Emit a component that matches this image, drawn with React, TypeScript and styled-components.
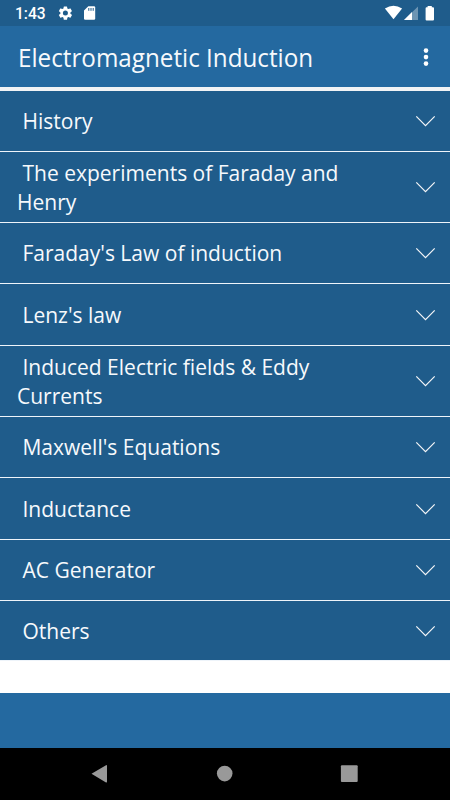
import React from "react";
import styled, { createGlobalStyle } from "styled-components";

const Global = createGlobalStyle`
  * { box-sizing: border-box; }
  body { margin: 0; background: #fff; }
`;
const Screen = styled.div`
  width: 450px;
  height: 800px;
  display: flex;
  flex-direction: column;
  overflow: hidden;
  background: #fff;
  color: #f6f9fc;
  font-family: "Open Sans", "Noto Sans", sans-serif;
`;
const StatusBar = styled.div`
  height: 26px;
  flex: none;
  display: flex;
  align-items: center;
  background: #1f5c8b;
  color: #fff;
`;
const Clock = styled.span`
  width: 43px;
  margin-left: 15px;
  font: 500 15.6px/26px Roboto, sans-serif;
  padding-top: 2px;
`;
const StatusIcons = styled.svg`
  display: block;
  flex: none;
`;
const Spacer = styled.div`
  flex: 1;
`;
const Header = styled.header`
  height: 65px;
  flex: none;
  display: flex;
  align-items: center;
  justify-content: space-between;
  padding: 0 19px 0 17.8px;
  background: #2469a0;
  border-bottom: 4px solid #f1f3f5;
`;
const Title = styled.h1`
  margin: 0;
  font-size: 24.8px;
  line-height: 34px;
  font-weight: 400;
  white-space: nowrap;
  transform: scaleX(0.977);
  transform-origin: left;
`;
const MenuButton = styled.button`
  border: 0;
  padding: 0;
  background: none;
  display: flex;
  height: 20px;
`;
const List = styled.main`
  flex: none;
`;
const Row = styled.div<{ $height: number }>`
  height: ${(p) => p.$height}px;
  display: flex;
  align-items: center;
  justify-content: space-between;
  padding: 0 14px 0 16.5px;
  background: #1f5c8b;
  border-bottom: 1px solid #eef4fa;
`;
const Label = styled.span`
  font-size: 22px;
  line-height: 29.5px;
  white-space: pre;
  transform: scaleX(0.955);
  transform-origin: left;
`;
const Footer = styled.footer`
  height: 55px;
  margin-top: 32px;
  flex: none;
  background: #2469a0;
`;
const NavBar = styled.nav`
  flex: 1;
  background: #000;
`;

const rows = [
  { text: " History", height: 61 },
  { text: " The experiments of Faraday and\nHenry", height: 71 },
  { text: " Faraday's Law of induction", height: 61 },
  { text: " Lenz's law", height: 62 },
  { text: " Induced Electric fields & Eddy\nCurrents", height: 71 },
  { text: " Maxwell's Equations", height: 61 },
  { text: " Inductance", height: 62 },
  { text: " AC Generator", height: 61 },
  { text: " Others", height: 60 },
];

const Chevron = () => (
  <svg width="21" height="12" viewBox="0 0 21 12" fill="none" stroke="#f4f6f8" strokeWidth="1.2">
    <path d="M1.3 1.3L10.5 10.7L19.7 1.3" />
  </svg>
);

export default function App() {
  return (
    <Screen>
      <Global />
      <StatusBar>
        <Clock>1:43</Clock>
        <StatusIcons width="40" height="26" viewBox="58 0 40 26" fill="#fff">
          <g transform="translate(57 4.7) scale(.7)">
            <path d="M19.14 12.94c.04-.3.06-.61.06-.94s-.02-.64-.07-.94l2.03-1.58a.49.49 0 0 0 .12-.61l-1.92-3.32a.49.49 0 0 0-.59-.22l-2.39.96a7 7 0 0 0-1.62-.94L14.4 2.81a.48.48 0 0 0-.48-.41h-3.84a.47.47 0 0 0-.47.41l-.36 2.54a7.4 7.4 0 0 0-1.62.94l-2.39-.96a.47.47 0 0 0-.59.22L2.74 8.87a.48.48 0 0 0 .12.61l2.03 1.58a6 6 0 0 0 0 1.88l-2.03 1.58a.49.49 0 0 0-.12.61l1.92 3.32c.12.22.37.29.59.22l2.39-.96c.5.38 1.03.7 1.62.94l.36 2.54c.05.24.24.41.48.41h3.84c.24 0 .44-.17.47-.41l.36-2.54a7.4 7.4 0 0 0 1.62-.94l2.39.96c.22.08.47 0 .59-.22l1.92-3.32a.47.47 0 0 0-.12-.61zM12 15.6a3.6 3.6 0 1 1 0-7.2 3.6 3.6 0 0 1 0 7.2z" />
          </g>
          <path d="M88.3 6.3H94q1.2 0 1.2 1.2V18.6q0 1.2-1.2 1.2H85.2q-1.2 0-1.2-1.2V10.5z" />
          <path d="M88.8 8v2.8M91 8v2.8M93.2 8v2.8" stroke="#1f5c8b" strokeWidth="1" />
        </StatusIcons>
        <Spacer />
        <StatusIcons width="70" height="26" viewBox="380 0 70 26" fill="#fff">
          <path d="M384.9 8.5Q393.5 3 402.1 8.5L393.5 19.2Z" />
          <path d="M404 20L418 6.4V20Z" opacity=".35" />
          <path d="M404 20L412 12.1V20Z" />
          <path d="M427.6 6h4.2v1.3h1.2q1 0 1 1V19.4q0 1-1 1h-6.4q-1 0-1-1V8.3q0-1 1-1h1z" />
        </StatusIcons>
      </StatusBar>
      <Header>
        <Title>Electromagnetic Induction</Title>
        <MenuButton aria-label="Menu">
          <svg width="10" height="20" viewBox="0 0 10 20" fill="#fff">
            <circle cx="5" cy="3.6" r="2.3" />
            <circle cx="5" cy="10.1" r="2.3" />
            <circle cx="5" cy="16.6" r="2.3" />
          </svg>
        </MenuButton>
      </Header>
      <List>
        {rows.map((row) => (
          <Row key={row.text} $height={row.height}>
            <Label>{row.text}</Label>
            <Chevron />
          </Row>
        ))}
      </List>
      <Footer />
      <NavBar>
        <svg width="450" height="52" viewBox="0 748 450 52" fill="#999">
          <path d="M91.5 773.7L106 765.2Q107 764.6 107 766V781.5Q107 783 106 782.4Z" />
          <circle cx="224.7" cy="773.6" r="7.8" />
          <rect x="340.9" y="765.3" width="16.8" height="16.7" rx="1" />
        </svg>
      </NavBar>
    </Screen>
  );
}
